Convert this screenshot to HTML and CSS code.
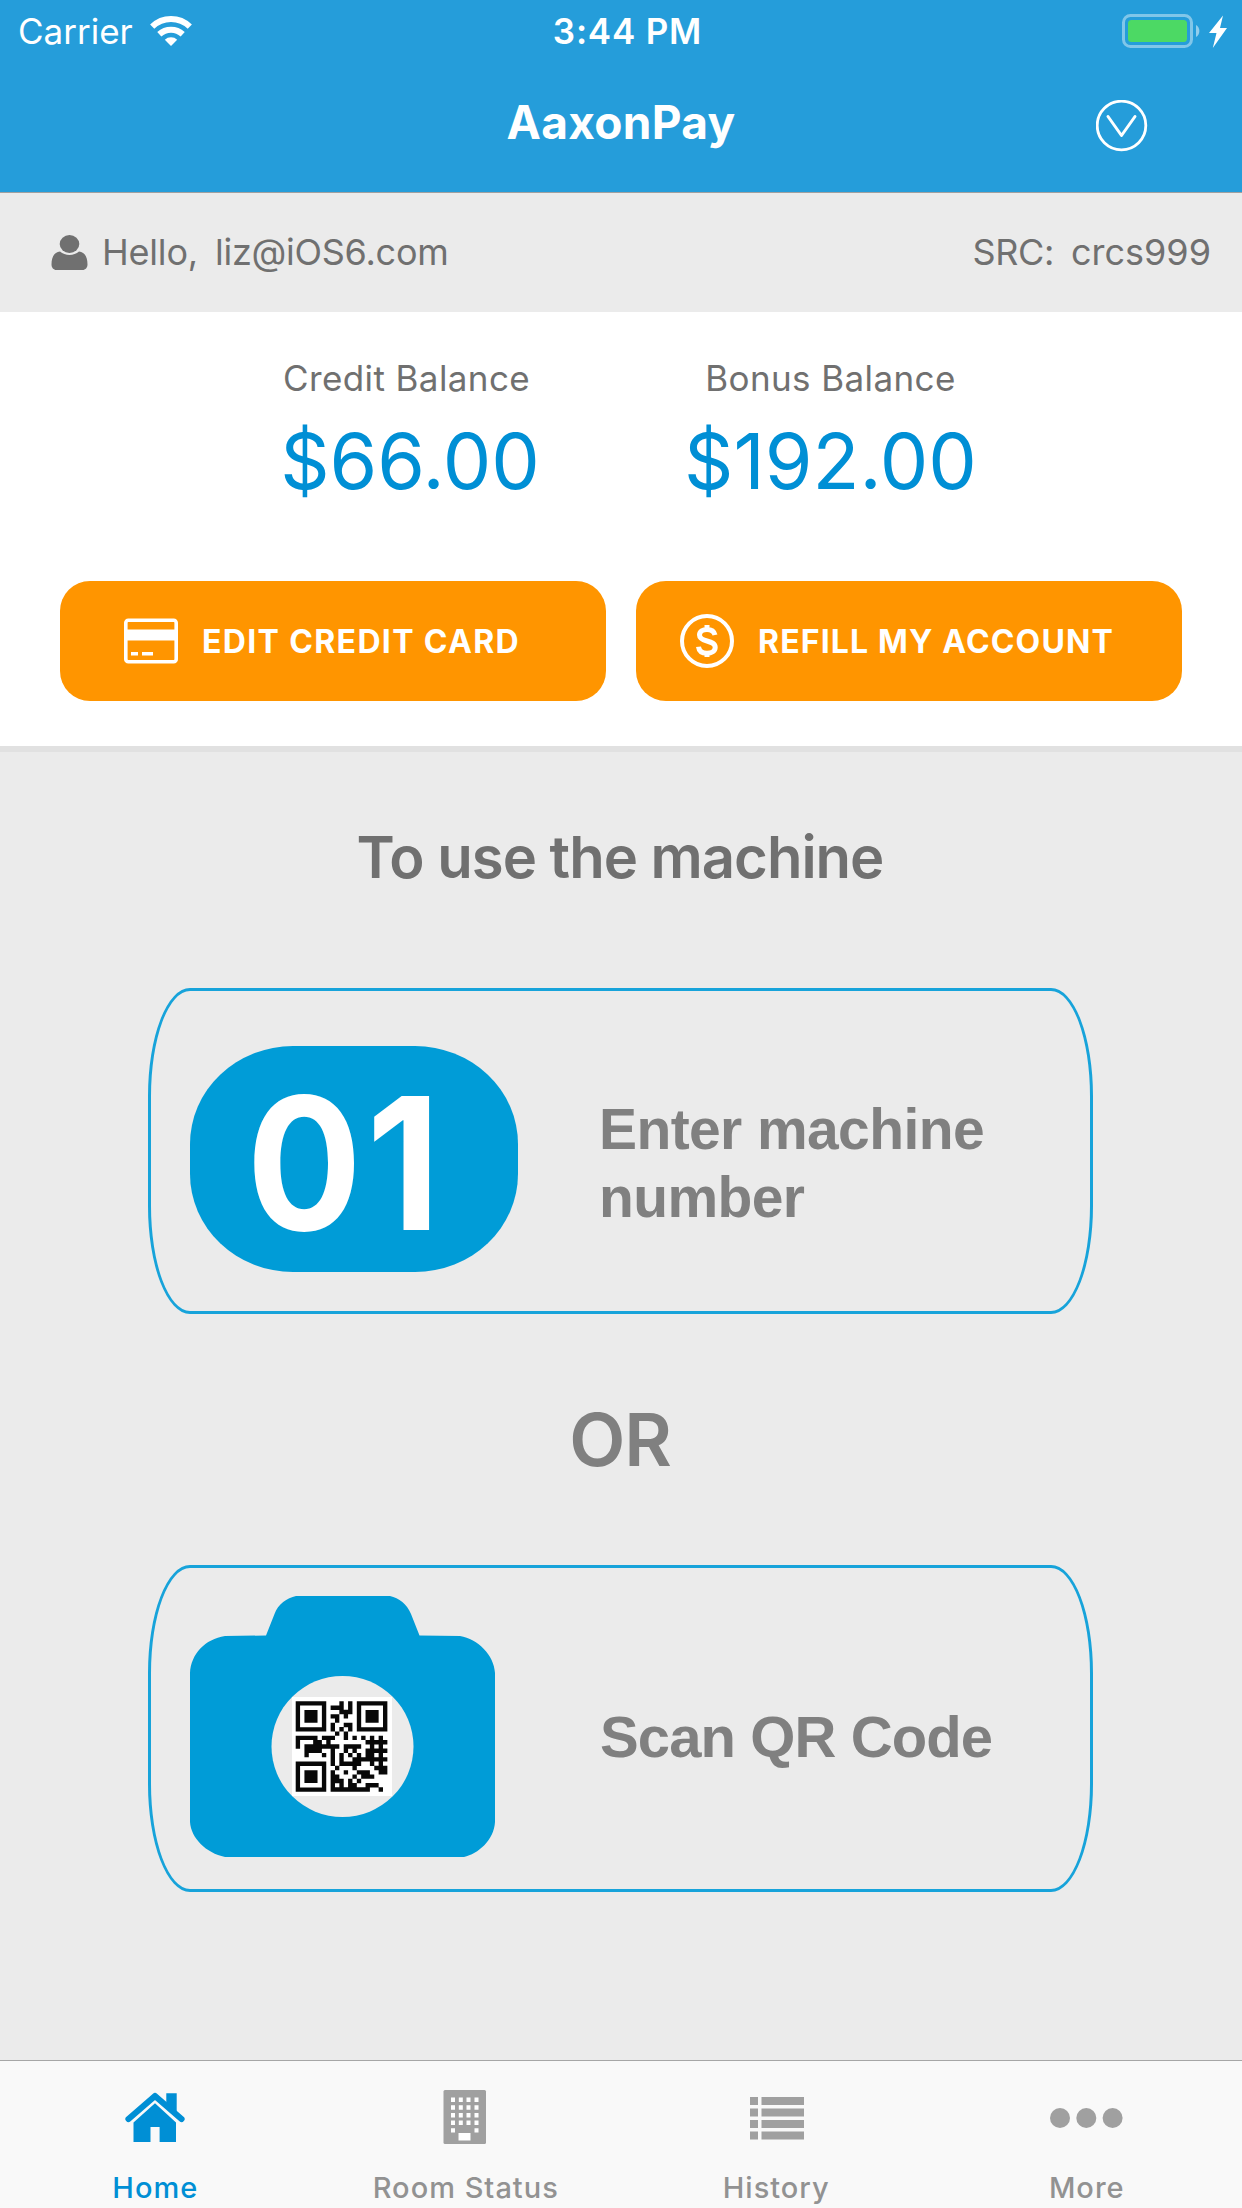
FILE: index.html
```
<!DOCTYPE html>
<html lang="en">
<head>
<meta charset="UTF-8">
<meta name="viewport" content="width=device-width, initial-scale=1.0">
<title>AaxonPay</title>
<link rel="stylesheet" href="styles.css">
</head>
<body>

<header class="header">
  <div class="status">
    <div class="carrier">
      <span>Carrier</span>
      <svg class="wifi" viewBox="0 0 42 30">
        <path d="M21 30l-6.200-6.300a9 9 0 0 1 12.400 0z" fill="#fff"/>
        <path d="M9.300 18.300a17 17 0 0 1 23.400 0" fill="none" stroke="#fff" stroke-width="6"/>
        <path d="M2.200 10.700a27 27 0 0 1 37.600 0" fill="none" stroke="#fff" stroke-width="6"/>
      </svg>
    </div>
    <span class="time">3:44 PM</span>
    <svg class="battery" viewBox="0 0 106 34">
      <rect x="1.500" y="1.500" width="68" height="31" rx="7" fill="none" stroke="#fff" stroke-opacity=".42" stroke-width="3"/>
      <rect x="6" y="6" width="59" height="22" rx="3.500" fill="#4cd964"/>
      <path d="M74 11a7 7 0 0 1 0 12z" fill="#fff" fill-opacity=".5"/>
      <path d="M101 1.500L87 19h7.500l-3.700 15L105 14h-7z" fill="#fff"/>
    </svg>
  </div>
  <div class="nav">
    <h1>AaxonPay</h1>
    <svg class="down" viewBox="0 0 52 52">
      <circle cx="25.500" cy="25.500" r="24.300" fill="none" stroke="#fff" stroke-width="2.800"/>
      <path d="M12 16.500l13.500 19 13.500-19" fill="none" stroke="#fff" stroke-width="3" stroke-linecap="round" stroke-linejoin="round"/>
    </svg>
  </div>
</header>

<div class="user">
  <svg class="avatar" viewBox="0 0 36 35">
    <ellipse cx="18" cy="9" rx="9.800" ry="9" fill="#707070"/>
    <path d="M8.500 16.500c5 4.500 14 4.500 19 0 6 .5 8.500 6 8.500 13 0 3-2 5.500-5 5.500H5c-3 0-5-2.500-5-5.500 0-7 2.500-12.500 8.500-13z" fill="#707070"/>
  </svg>
  <span class="hello">Hello,</span>
  <span class="mail">liz@iOS6.com</span>
  <span class="src">SRC:</span>
  <span class="code">crcs999</span>
</div>

<section class="account">
  <div class="balances">
    <div class="balance credit">
      <p class="label">Credit Balance</p>
      <p class="value">$66.00</p>
    </div>
    <div class="balance bonus">
      <p class="label">Bonus Balance</p>
      <p class="value">$192.00</p>
    </div>
  </div>
  <div class="buttons">
    <button class="btn edit">
      <svg viewBox="0 0 54 54">
        <rect x="1.800" y="6.300" width="50.400" height="41.400" rx="2.500" fill="none" stroke="#fff" stroke-width="3.600"/>
        <path d="M2 15.500h50v11H2zM7 38h7v3.600H7zM18 38h11v3.600H18z" fill="#fff"/>
      </svg>
      <span>EDIT CREDIT CARD</span>
    </button>
    <button class="btn refill">
      <svg viewBox="0 0 54 54">
        <circle cx="27" cy="27" r="25" fill="none" stroke="#fff" stroke-width="4"/>
        <path d="M35 21c-1-4-4-5.500-8-5.500s-7.500 2-7.500 5.500 3 4.800 7.500 6 8.200 2.300 8.200 6.300-3.700 6-8.200 6-8-2-8.500-6.500M27 11v5M27 38v5" fill="none" stroke="#fff" stroke-width="5"/>
      </svg>
      <span>REFILL MY ACCOUNT</span>
    </button>
  </div>
</section>

<main class="main">
  <h2>To use the machine</h2>
  <div class="card number">
    <div class="pill"><span>01</span></div>
    <p>Enter machine<br>number</p>
  </div>
  <div class="or">OR</div>
  <div class="card scan">
    <svg class="camera" viewBox="0 0 305 261">
      <path d="M76 39.500L84.500 18C88 8 97 2 106 0h94c9 2 17 8 21 18l8.500 21.500L270 40c18 3 34 19 35 37v149c-1 18-17 32-31 35H35C16 257 1 242 0 226V77C1 58 15 43 35 40z" fill="#009cd7"/>
      <ellipse cx="152.500" cy="150.500" rx="71" ry="70.500" fill="#ebebeb"/>
      <rect x="102" y="101" width="100" height="99" fill="#fff"/>
      <!-- qr modules, one line per row -->
      <g transform="translate(105.700 105.300) scale(4.365 4.305)" stroke="#080808">
        <path fill="none" d="M.5 .5h6v6h-6zM14.500 .5h6v6h-6zM.5 14.500h6v6h-6z"/>
        <path stroke="none" fill="#080808" d="M2 2h3v3H2zM16 2h3v3h-3zM2 16h3v3H2z"/>
        <path transform="translate(0 .5)" stroke-width="1.020" d="M10 0h1M12 0h1
          M8 1h3M12 1h1
          M10 2h3
          M8 3h2M11 3h1
          M9 4h1
          M8 5h1M11 5h2
          M8 6h1M10 6h1M12 6h1
          M9 7h1M11 7h1
          M0 8h5M6 8h3M11 8h1M13 8h1M15 8h1M17 8h1M19 8h1
          M0 9h1M4 9h2M7 9h1M16 9h5
          M0 10h1M2 10h8M11 10h4M17 10h1M19 10h1
          M2 11h4M8 11h1M11 11h1M13 11h1M16 11h5
          M2 12h1M6 12h1M8 12h1M10 12h1M12 12h1M14 12h1M16 12h2M19 12h1
          M8 13h1M10 13h1M13 13h8
          M8 14h1M10 14h5M17 14h1M19 14h1
          M9 15h1M13 15h1M18 15h3
          M8 16h1M11 16h1M14 16h3M19 16h2
          M8 17h2M13 17h1M15 17h3
          M8 18h3M12 18h1M14 18h1
          M8 19h1M10 19h1M12 19h2M16 19h3
          M8 20h9M19 20h1"/>
      </g>
    </svg>
    <p>Scan QR Code</p>
  </div>
</main>

<nav class="tabs">
  <a class="tab active">
    <svg viewBox="0 0 60 54">
      <path d="M41.300 3.300h10.400v22L41.300 15z" fill="currentColor"/>
      <path d="M3.500 29L30 6l26.500 23" fill="none" stroke="currentColor" stroke-width="6.200" stroke-linecap="round" stroke-linejoin="round"/>
      <path d="M30 13.300L51 32.500V52H34.600V37h-9.100v15h-17V32.500z" fill="currentColor"/>
    </svg>
    <span>Home</span>
  </a>
  <a class="tab">
    <svg viewBox="0 0 60 54">
      <rect x="7.500" y="0" width="42.500" height="54" rx="1.500" fill="#a0a0a0"/>
      <path d="M17 7.500v35M40.500 7.500v35" fill="none" stroke="#fff" stroke-width="4" stroke-dasharray="4.500 3.200"/>
      <path d="M24.800 7.500v28M32.500 7.500v28" fill="none" stroke="#fff" stroke-width="4" stroke-dasharray="4.500 3.200"/>
      <path d="M22.500 43h12v7.500h-12z" fill="#fff"/>
    </svg>
    <span>Room Status</span>
  </a>
  <a class="tab">
    <svg viewBox="0 0 60 54">
      <path d="M4 11h8M4 22.500h8M4 34h8M4 45.500h8M15.500 11H58M15.500 22.500H58M15.500 34H58M15.500 45.500H58" fill="none" stroke="#a0a0a0" stroke-width="8"/>
    </svg>
    <span>History</span>
  </a>
  <a class="tab">
    <svg class="dots" viewBox="0 0 74 54">
      <circle cx="10" cy="28" r="10" fill="#a0a0a0"/>
      <circle cx="36.300" cy="28" r="10" fill="#a0a0a0"/>
      <circle cx="62.600" cy="28" r="10" fill="#a0a0a0"/>
    </svg>
    <span>More</span>
  </a>
</nav>

</body>
</html>
```
FILE: styles.css
```
*{
  margin: 0;
  padding: 0;
  box-sizing: border-box;
}
body{
  width: 1242px;
  height: 2208px;
  display: flex;
  flex-direction: column;
  background: #ebebeb;
  color: #707070;
  font-family: Inter, "Liberation Sans", sans-serif;
  overflow: hidden;
}
svg{
  display: block;
  flex: none;
}
/* header */
.header{
  height: 193px;
  background: #259dda;
  border-bottom: 1px solid #a0a0a0;
  color: #fff;
}
.status{
  height: 60px;
  padding: 2px 14px 0 18px;
  display: grid;
  grid-template-columns: 1fr auto 1fr;
  align-items: center;
  font-size: 35px;
}
.carrier{
  display: flex;
  align-items: center;
  gap: 17px;
}
.wifi{
  width: 42px;
  height: 30px;
}
.time{
  padding-left: 9px;
  font-weight: 600;
  letter-spacing: .8px;
}
.battery{
  width: 106px;
  height: 34px;
  justify-self: end;
}
.nav{
  height: 132px;
  padding-right: 94px;
  display: grid;
  grid-template-columns: 1fr auto 1fr;
  align-items: center;
}
.nav h1{
  grid-column: 2;
  padding: 0 0 9px 94px;
  font-size: 46px;
  font-weight: 700;
  letter-spacing: .3px;
}
.down{
  width: 52px;
  height: 52px;
  justify-self: end;
}
/* user */
.user{
  height: 119px;
  padding: 0 31px 1px 51px;
  display: flex;
  align-items: center;
  font-size: 36px;
}
.avatar{
  width: 37px;
  height: 35px;
}
.hello{
  margin-left: 14px;
  letter-spacing: -.2px;
}
.mail{
  margin-left: 17px;
  letter-spacing: -.25px;
}
.src{
  margin-left: auto;
  letter-spacing: -.4px;
}
.code{
  margin-left: 17px;
}
/* account */
.account{
  height: 440px;
  padding-top: 44px;
  background: #fff;
  border-bottom: 6px solid #e1e1e1;
}
.balances{
  display: flex;
  gap: 150px;
  padding-left: 284px;
}
.balance{
  display: flex;
  flex-direction: column;
  align-items: center;
  white-space: nowrap;
}
.credit{
  width: 252px;
}
.credit .label{
  align-self: flex-start;
  margin-left: -1px;
}
.bonus{
  width: 289px;
}
.label{
  font-size: 35px;
  line-height: 44px;
  letter-spacing: .4px;
}
.value{
  margin-top: 14px;
  font-size: 77px;
  line-height: 94px;
  color: #008fd5;
}
.buttons{
  display: flex;
  gap: 30px;
  padding: 73px 60px 0;
}
.btn{
  width: 546px;
  height: 120px;
  display: flex;
  align-items: center;
  gap: 24px;
  border: 0;
  border-radius: 30px;
  background: #ff9500;
  color: #fff;
  font-family: inherit;
  font-size: 32px;
  font-weight: 700;
  letter-spacing: 1.35px;
  white-space: nowrap;
}
.btn svg{
  width: 54px;
  height: 54px;
}
.edit{
  padding-left: 64px;
}
.refill{
  padding-left: 44px;
  letter-spacing: 1.15px;
}
/* main */
.main{
  flex: 1;
  padding: 70px 148px 0;
}
.main h2{
  margin-bottom: 96px;
  padding-right: 2px;
  font-size: 58px;
  font-weight: 600;
  line-height: 70px;
  letter-spacing: -1px;
  text-align: center;
}
.card{
  width: 945px;
  height: 326px;
  padding-left: 39px;
  display: flex;
  align-items: center;
  border: 3px solid #17a3da;
  border-radius: 42px / 108px;
  color: #808080;
  font-family: "Liberation Sans", Arial, sans-serif;
  font-size: 57px;
  font-weight: bold;
  line-height: 68px;
  white-space: nowrap;
}
.number{
  padding-top: 16px;
}
.number p{
  padding-top: 7px;
  margin-left: 81px;
  letter-spacing: -.6px;
}
.pill{
  width: 328px;
  height: 226px;
  padding-right: 16px;
  border-radius: 103px / 98px;
  background: #009cd7;
  color: #fff;
  font-family: Inter, sans-serif;
  font-size: 184px;
  font-weight: 700;
  line-height: 234px;
  text-align: center;
}
.pill span{
  display: inline-block;
  letter-spacing: 5px;
  transform: scaleX(.93);
}
.or{
  padding-right: 2px;
  line-height: 251px;
  font-size: 73px;
  font-weight: 600;
  letter-spacing: -1px;
  color: #808080;
  text-align: center;
}
.scan{
  height: 327px;
  padding-bottom: 4px;
}
.scan p{
  padding-top: 20px;
  margin-left: 105px;
  font-size: 58px;
  letter-spacing: -.9px;
}
.camera{
  width: 305px;
  height: 261px;
}
/* tabs */
.tabs{
  height: 148px;
  display: flex;
  background: #f9f9f9;
  border-top: 1px solid #a6a6a6;
}
.tab{
  flex: 1;
  padding-top: 29px;
  display: flex;
  flex-direction: column;
  align-items: center;
  color: #929292;
  font-size: 29px;
  font-weight: 500;
  line-height: 36px;
  letter-spacing: 1px;
}
.tab svg{
  width: 60px;
  height: 54px;
  margin-bottom: 26px;
}
.tab .dots{
  width: 74px;
}
.active{
  color: #008fd5;
}
```
